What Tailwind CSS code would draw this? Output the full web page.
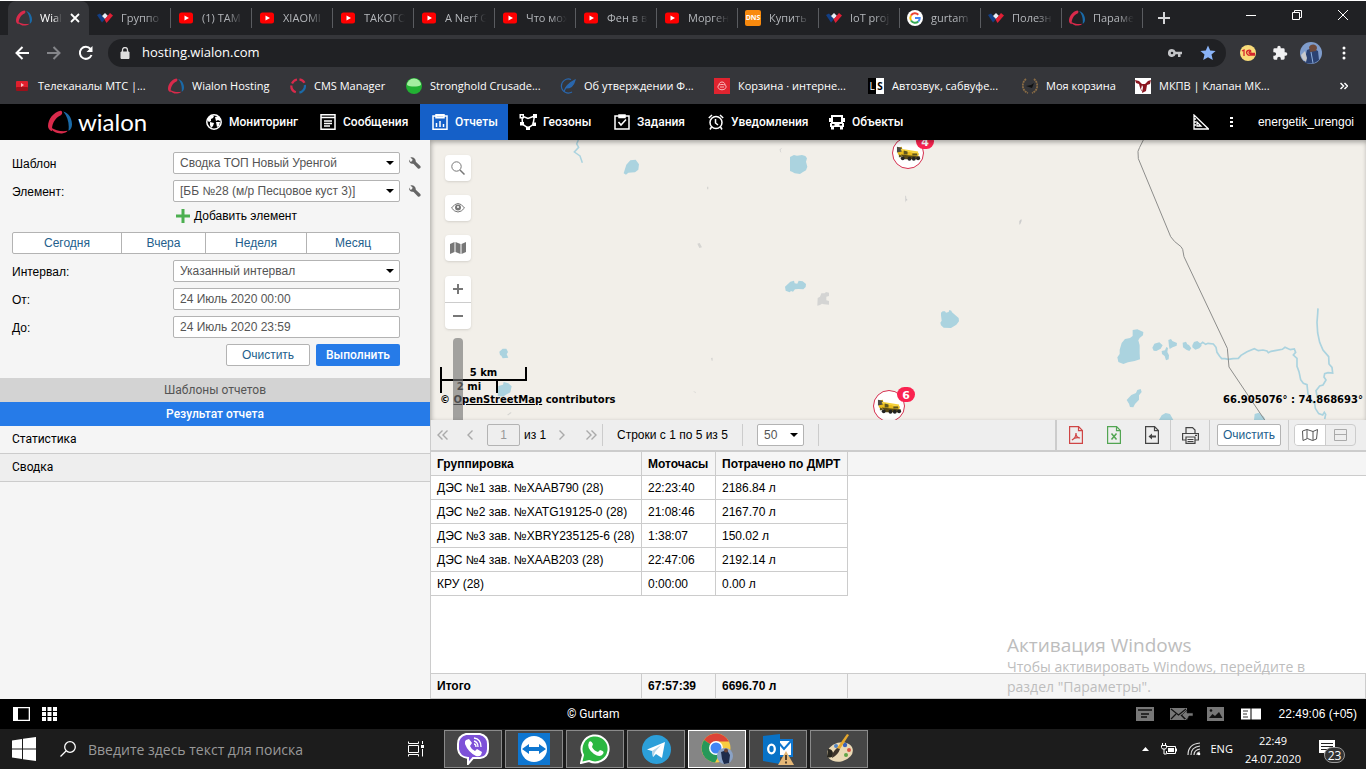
<!DOCTYPE html>
<html lang="ru">
<head>
<meta charset="utf-8">
<title>Wialon Hosting</title>
<script src="https://cdn.jsdelivr.net/npm/@tailwindcss/browser@4"></script>
</head>
<body class="flex h-screen flex-col overflow-hidden bg-white font-['Liberation_Sans',Arial,sans-serif] text-xs text-black">

<svg class="hidden" aria-hidden="true">
  <symbol id="ring" viewBox="0 0 24 24">
    <path fill="#d92a4b" d="M12.500.8C5.500 2 0 9.500 0 16c0 2.600 1.600 4.600 4.200 5.200C3.200 15 6.500 8 12.800 5.200c2-.9 1.800-4.600-.3-4.400z"/>
    <path fill="#d92a4b" d="M2.800 17.500c1.200 3.800 5.700 6.200 11.200 5.900 2.700-.2 4.700-1.200 5.700-2.600-6 1-12-.1-16.900-3.300z"/>
    <path fill="#1a6aa8" d="M15.300 1.500C20.500 3 23.800 8 24 14c.1 3.400-1.200 5.800-3.600 6.800C21.500 14.500 20 7 15.300 1.500z"/>
  </symbol>
  <symbol id="yt" viewBox="0 0 16 16"><rect x="1" y="2.500" width="14" height="11" rx="2.500" fill="#f00"/><path d="M6.500 5.500v5L11 8z" fill="#fff"/></symbol>
  <symbol id="forum" viewBox="0 0 16 16"><path d="M0 5l3-1.500L8 9l-3 3.500z" fill="#123f86"/><path d="M5 6l3-3 3 3-3 3z" fill="#e8edf5"/><path d="M7.500 9.500L13 3l3 2.500L9.500 13z" fill="#e01f35"/></symbol>
  <symbol id="wrench" viewBox="0 0 12 12"><path d="M1.400.5L3.600 2.600l-.6 1.600-1.600.5L0 2.500C-.2 4.800 1 6.800 3.200 6.800c.6 0 1 0 1.400.2l4.300 4.500c1.300 1 3.600-.8 2.400-2.400L6.800 4.700C7 1.800 4.200-.4 1.400.5z" fill="#666"/></symbol>
  <symbol id="truck" viewBox="0 0 26 16">
    <path d="M1 2l5-1 1 4 17 3-1 3H8L2 9z" fill="#e9bc1d"/><path d="M1 1l5 1v4L1 7z" fill="#4a4a45"/><path d="M5 3l18 3v2L5 5z" fill="#f5d23a"/><path d="M8 5l4 1v3H8zM17 8h5v2h-5zM3 9l3 1v2H3z" fill="#5f5620"/><path d="M5 9l20 2-1 3H9z" fill="#5a4b16"/>
    <circle cx="7" cy="13" r="2" fill="#222"/><circle cx="14" cy="13.500" r="2" fill="#222"/><circle cx="18.500" cy="13.500" r="2" fill="#222"/><circle cx="23" cy="13" r="2" fill="#222"/>
  </symbol>
</svg>

<div class="h-px shrink-0 bg-white"></div>

<!-- Browser tabs -->
<header class="shrink-0 font-['Open_Sans','Noto_Sans',sans-serif] text-[11px] text-white">
  <div class="flex h-[34px] bg-[#202124]">
    <div class="flex min-w-0 flex-1 pl-2">
      <div class="flex w-[81px] shrink-0 items-center rounded-t-lg bg-[#35363a] pl-2">
        <svg class="size-4 shrink-0"><use href="#ring"/></svg>
        <span class="ml-2 w-[22px] overflow-hidden whitespace-nowrap [mask-image:linear-gradient(to_right,#000_60%,transparent)]">Wialon</span>
        <button aria-label="Закрыть вкладку" class="ml-2"><svg class="size-2.5" viewBox="0 0 10 10" stroke="#fff" stroke-width="1.800"><path d="M1 1l8 8M9 1L1 9"/></svg></button>
      </div>
      <div class="flex min-w-0 text-[#b4b7bb] *:flex *:w-[81px] *:shrink-0 *:items-center *:gap-2 *:pl-2">
        <div><svg class="size-4 shrink-0"><use href="#forum"/></svg><span class="w-[41px] overflow-hidden whitespace-nowrap [mask-image:linear-gradient(to_right,#000_60%,transparent)]">Группо</span><i class="ml-auto -mr-px h-5 w-px shrink-0 bg-[#5a5c60]"></i></div>
        <div><svg class="size-4 shrink-0"><use href="#yt"/></svg><span class="w-[41px] overflow-hidden whitespace-nowrap [mask-image:linear-gradient(to_right,#000_60%,transparent)]">(1) ТАМ</span><i class="ml-auto -mr-px h-5 w-px shrink-0 bg-[#5a5c60]"></i></div>
        <div><svg class="size-4 shrink-0"><use href="#yt"/></svg><span class="w-[41px] overflow-hidden whitespace-nowrap [mask-image:linear-gradient(to_right,#000_60%,transparent)]">XIAOMI</span><i class="ml-auto -mr-px h-5 w-px shrink-0 bg-[#5a5c60]"></i></div>
        <div><svg class="size-4 shrink-0"><use href="#yt"/></svg><span class="w-[41px] overflow-hidden whitespace-nowrap [mask-image:linear-gradient(to_right,#000_60%,transparent)]">ТАКОГО</span><i class="ml-auto -mr-px h-5 w-px shrink-0 bg-[#5a5c60]"></i></div>
        <div><svg class="size-4 shrink-0"><use href="#yt"/></svg><span class="w-[41px] overflow-hidden whitespace-nowrap [mask-image:linear-gradient(to_right,#000_60%,transparent)]">A Nerf G</span><i class="ml-auto -mr-px h-5 w-px shrink-0 bg-[#5a5c60]"></i></div>
        <div><svg class="size-4 shrink-0"><use href="#yt"/></svg><span class="w-[41px] overflow-hidden whitespace-nowrap [mask-image:linear-gradient(to_right,#000_60%,transparent)]">Что мож</span><i class="ml-auto -mr-px h-5 w-px shrink-0 bg-[#5a5c60]"></i></div>
        <div><svg class="size-4 shrink-0"><use href="#yt"/></svg><span class="w-[41px] overflow-hidden whitespace-nowrap [mask-image:linear-gradient(to_right,#000_60%,transparent)]">Фен в в</span><i class="ml-auto -mr-px h-5 w-px shrink-0 bg-[#5a5c60]"></i></div>
        <div><svg class="size-4 shrink-0"><use href="#yt"/></svg><span class="w-[41px] overflow-hidden whitespace-nowrap [mask-image:linear-gradient(to_right,#000_60%,transparent)]">Морген</span><i class="ml-auto -mr-px h-5 w-px shrink-0 bg-[#5a5c60]"></i></div>
        <div><span class="flex size-4 shrink-0 items-center justify-center rounded-xs bg-[#f98a0e] text-[7px] font-bold text-white">DNS</span><span class="w-[41px] overflow-hidden whitespace-nowrap [mask-image:linear-gradient(to_right,#000_60%,transparent)]">Купить</span><i class="ml-auto -mr-px h-5 w-px shrink-0 bg-[#5a5c60]"></i></div>
        <div><svg class="size-4 shrink-0"><use href="#forum"/></svg><span class="w-[41px] overflow-hidden whitespace-nowrap [mask-image:linear-gradient(to_right,#000_60%,transparent)]">IoT proj</span><i class="ml-auto -mr-px h-5 w-px shrink-0 bg-[#5a5c60]"></i></div>
        <div><svg class="size-4 shrink-0" viewBox="0 0 16 16" fill="none" stroke-width="2"><circle cx="8" cy="8" r="8" fill="#fff"/><path d="M4 5.500A4.700 4.700 0 0 1 11.300 4.700" stroke="#ea4335"/><path d="M4 5.500a4.800 4.800 0 0 0 0 5" stroke="#fbbc05"/><path d="M4 10.500a4.700 4.700 0 0 0 7.300 1" stroke="#34a853"/><path d="M11.300 11.500A4.700 4.700 0 0 0 12.700 8H8" stroke="#4285f4"/></svg><span class="w-[41px] overflow-hidden whitespace-nowrap [mask-image:linear-gradient(to_right,#000_60%,transparent)]">gurtam</span><i class="ml-auto -mr-px h-5 w-px shrink-0 bg-[#5a5c60]"></i></div>
        <div><svg class="size-4 shrink-0"><use href="#forum"/></svg><span class="w-[41px] overflow-hidden whitespace-nowrap [mask-image:linear-gradient(to_right,#000_60%,transparent)]">Полезн</span><i class="ml-auto -mr-px h-5 w-px shrink-0 bg-[#5a5c60]"></i></div>
        <div><svg class="size-4 shrink-0"><use href="#ring"/></svg><span class="w-[41px] overflow-hidden whitespace-nowrap [mask-image:linear-gradient(to_right,#000_60%,transparent)]">Параме</span><i class="ml-auto -mr-px h-5 w-px shrink-0 bg-[#5a5c60]"></i></div>
      </div>
      <button aria-label="Новая вкладка" class="ml-4"><svg class="size-3" viewBox="0 0 12 12" stroke="#d5d6d8" stroke-width="2"><path d="M6 0v12M0 6h12"/></svg></button>
    </div>
    <div class="flex h-7 w-[138px] shrink-0 items-center">
      <button aria-label="Свернуть" class="flex w-[46px] justify-center"><svg class="size-2.5" viewBox="0 0 10 10" stroke="#fff"><path d="M0 5.500h10"/></svg></button>
      <button aria-label="Восстановить" class="flex w-[46px] justify-center"><svg class="size-2.5" viewBox="0 0 10 10" fill="none" stroke="#fff"><path d="M.5 2.500h7v7h-7zM2.500 2.500v-2h7v7h-2"/></svg></button>
      <button aria-label="Закрыть" class="flex w-[46px] justify-center"><svg class="size-2.5" viewBox="0 0 10 10" stroke="#fff"><path d="M0 0l10 10M10 0L0 10"/></svg></button>
    </div>
  </div>

  <!-- Address bar -->
  <div class="flex h-[35px] items-center bg-[#35363a]">
    <nav class="flex w-[108px] shrink-0 items-center gap-4 pl-3.5">
      <button aria-label="Назад"><svg class="size-4" viewBox="0 0 16 16" fill="none" stroke="#fff" stroke-width="2"><path d="M15 8H2.500M8.500 2l-6 6 6 6"/></svg></button>
      <button aria-label="Вперёд"><svg class="size-4" viewBox="0 0 16 16" fill="none" stroke="#85868a" stroke-width="2"><path d="M1 8h12.500M7.500 2l6 6-6 6"/></svg></button>
      <button aria-label="Обновить"><svg class="size-4" viewBox="0 0 16 16" fill="none" stroke="#fff" stroke-width="2"><path d="M13.500 10A6 6 0 1 1 12.500 4"/><path d="M14.500 1v6h-6z" fill="#fff" stroke="none"/></svg></button>
    </nav>
    <div class="flex h-7 min-w-0 flex-1 items-center rounded-full bg-[#202124] pr-2.5 pl-3">
      <svg class="mr-3 h-3 w-2.5 shrink-0" viewBox="0 0 10 12"><path d="M1 5h8v6.500H1z" fill="#ddd" stroke="#ddd"/><path d="M2.500 5V3a2.500 2.500 0 0 1 5 0v2" fill="none" stroke="#ddd" stroke-width="1.300"/></svg>
      <input aria-label="Адрес" value="hosting.wialon.com" class="min-w-0 flex-1 text-[13px] text-white outline-none">
      <svg class="mr-[18px] h-3 w-3.5" viewBox="0 0 14 10"><path fill-rule="evenodd" fill="#c4c5c8" d="M4 1a4 4 0 1 0 3.700 5.300H10V9h2.500V6.300H14V3.700H7.700A4 4 0 0 0 4 1zm0 2.700a1.300 1.300 0 1 1 0 2.600 1.300 1.300 0 0 1 0-2.600z"/></svg>
      <svg class="size-4" viewBox="0 0 16 16"><path fill="#8ab4f8" d="M8 .5l2.200 5 5.400.5-4.100 3.600 1.300 5.400L8 12.200 3.200 15l1.300-5.400L.4 6l5.400-.5z"/></svg>
    </div>
    <div class="flex w-[140px] shrink-0 items-center pl-3.5">
      <svg class="size-4" viewBox="0 0 16 16"><circle cx="8" cy="8" r="8" fill="#f9dc7a"/><path d="M2 6l2-1v6M11 6a2.500 2.500 0 1 0-1 4h5M11 7.500a1 1 0 1 0-1 1h5" stroke="#d4252c" fill="none" stroke-width="1.300"/></svg>
      <svg class="ml-4 size-4" viewBox="0 0 24 24"><path fill="#f1f1f2" d="M20.500 11H19V7a2 2 0 0 0-2-2h-4V3.500a2.500 2.500 0 0 0-5 0V5H4a2 2 0 0 0-2 2v3.800h1.500a2.700 2.700 0 0 1 0 5.400H2V20c0 1.100.9 2 2 2h3.800v-1.500a2.700 2.700 0 0 1 5.400 0V22H17a2 2 0 0 0 2-2v-4h1.500a2.500 2.500 0 0 0 0-5z"/></svg>
      <svg class="ml-3 size-[22px]" viewBox="0 0 22 22"><circle cx="11" cy="11" r="11" fill="#7f9ccb"/><path d="M4 20L7 8l5-2 6 3 1 9q-7 6-15 2z" fill="#2b4272"/><path d="M9 5c2-4 8-3 8 1l-1 3-6 1z" fill="#6d4a3c"/><path d="M1 13l4-4 2 7-1 4q-4-2-5-7z" fill="#c8c9cc"/><path d="M11 10l2 11" stroke="#8fb0dd"/></svg>
      <svg class="ml-5 h-4 w-1" viewBox="0 0 4 16" fill="#fff"><circle cx="2" cy="3" r="1.500"/><circle cx="2" cy="8" r="1.500"/><circle cx="2" cy="13" r="1.500"/></svg>
    </div>
  </div>

  <!-- Bookmarks -->
  <nav class="flex h-[34px] items-center bg-[#35363a] pr-[18px] pb-0.5 pl-3.5 *:whitespace-nowrap">
    <a href="#" class="flex w-[154px] shrink-0 items-center gap-2"><svg class="size-4" viewBox="0 0 16 16"><rect x="2" y="3" width="12" height="9" rx="1" fill="#df1f2d"/><rect x="2" y="9" width="12" height="4" rx="1" fill="#9d101a"/><path d="M7 5v4l3-2z" fill="#f6c3c6"/></svg>Телеканалы МТС |...</a>
    <a href="#" class="flex w-[122px] shrink-0 items-center gap-2"><svg class="size-4"><use href="#ring"/></svg>Wialon Hosting</a>
    <a href="#" class="flex w-[116px] shrink-0 items-center gap-2"><svg class="size-4" viewBox="0 0 16 16" fill="none" stroke-width="2.200"><path d="M2 5.500a7 7 0 0 1 5-4M9.500 1.300a7 7 0 0 1 5 3.500M1.300 7.500a7 7 0 0 0 4.500 6.800" stroke="#d92a4b"/><path d="M14.900 7a7 7 0 0 1-5.500 7.700" stroke="#1a6aa8"/></svg>CMS Manager</a>
    <a href="#" class="flex w-[154px] shrink-0 items-center gap-2"><svg class="size-4" viewBox="0 0 16 16"><circle cx="8" cy="8" r="8" fill="#22b233"/><path d="M1 7a7 6.500 0 0 1 14 0c-3 2-11 2-14 0z" fill="#a4eea0"/></svg>Stronghold Crusade...</a>
    <a href="#" class="flex w-[154px] shrink-0 items-center gap-2"><svg class="size-4" viewBox="0 0 16 16" fill="none" stroke="#2a67ad" stroke-width="1.200"><path d="M11 1.500A7 7 0 1 0 12 14"/><path d="M4 14c1-5 5-9 11-12-1 4-4 8-9 8" fill="#2a67ad"/></svg>Об утверждении Ф...</a>
    <a href="#" class="flex w-[154px] shrink-0 items-center gap-2"><svg class="size-4" viewBox="0 0 16 16"><path d="M0 0h16v16H0z" fill="#e0242f"/><path d="M5 7c0-4 6-4 6 0M4 8c0-2 8-2 8 0 1 5-9 5-8 0zM6 9h4" stroke="#fbb8bc" fill="none"/></svg>Корзина · интерне...</a>
    <a href="#" class="flex w-[154px] shrink-0 items-center gap-2"><span class="flex size-4 text-[10px] leading-4"><b class="w-2 bg-black text-center font-normal text-white">L</b><b class="w-2 bg-white text-center text-black">S</b></span>Автозвук, сабвуфе...</a>
    <a href="#" class="flex w-[113px] shrink-0 items-center gap-2"><svg class="size-4" viewBox="0 0 16 16" fill="none"><path d="M4 1c-5 4-4 12 2 14M12 1c5 4 4 12-2 14" stroke="#8a6c45" stroke-width="1.800" stroke-dasharray="2 .7"/><path d="M4 8l6 2 2-5-3 2z" fill="#111"/></svg>Моя корзина</a>
    <a href="#" class="flex shrink-0 items-center gap-2"><svg class="size-4" viewBox="0 0 16 16"><path d="M0 0h16v16H0z" fill="#fff"/><path d="M0 2l4 1 3 3h3l3-3 3-1-1 4-3 1-1 6-4 2 1-6-1-2-1 4 2 3C6 13 5 10 4 6L1 5z" fill="#8b1520"/></svg>МКПВ | Клапан МК...</a>
    <button aria-label="Другие закладки" class="ml-auto"><svg class="h-2 w-2" viewBox="0 0 8 8" fill="none" stroke="#fff" stroke-width="1.500"><path d="M.5 1l3 3-3 3M4.500 1l3 3-3 3"/></svg></button>
  </nav>
</header>

<!-- Application header -->
<header class="flex h-9 shrink-0 items-center bg-black font-[Roboto,'Liberation_Sans',sans-serif] text-white">
  <a href="#" class="flex w-[194px] shrink-0 items-center pl-12" aria-label="Wialon">
    <svg class="size-6"><use href="#ring"/></svg>
    <span class="ml-1.5 font-[Lato,sans-serif] text-2xl leading-6">wialon</span>
  </a>
  <nav class="flex h-full font-medium *:flex *:shrink-0 *:items-center *:gap-[7px] *:pl-3 *:whitespace-nowrap">
    <a href="#" class="w-[114px]"><svg class="size-4" viewBox="0 0 16 16"><circle cx="8" cy="8" r="7.200" fill="none" stroke="#fff" stroke-width="1.500"/><path fill="#fff" d="M2 4l4-3 2 1-1 2-2 1v2L3 8 1 6zM4 8l4 1-1 3-2 2-1-3zM9 3l4-1 2 4-1 1-2-1-2 1zM10 8l4 0-1 4-2 1z"/></svg>Мониторинг</a>
    <a href="#" class="w-[112px]"><svg class="size-4" viewBox="0 0 16 16" fill="none" stroke="#fff" stroke-width="1.500"><path d="M1 .8h14v14.500H1zM1 3.500h14M4 7h8M4 9.500h8M4 12h6"/></svg>Сообщения</a>
    <a href="#" class="w-[88px] bg-[#1560c8]"><svg class="size-4" viewBox="0 0 16 16" fill="none" stroke="#fff" stroke-width="1.500"><path d="M1 2h14v13.200H1zM4 .8h8v3H4zM4.500 9v4M8 7v6M11.500 10v3"/></svg>Отчеты</a>
    <a href="#" class="w-[94px]"><svg class="size-4 overflow-visible" viewBox="0 0 16 16" fill="none" stroke="#fff" stroke-width="1.500"><path d="M2 2l6 2.500L14.500 2 13 10.500 8 14l-5.500-4z"/><path d="M-.5 0h4.500v4.500h-4.500zM13 0h4v4h-4zM6 12.500h4V16H6zM0 8h4v3.500H0zM12.500 8.500h3.500v3.500h-3.500z" fill="#fff" stroke="none"/><path d="M1 1.500h1.500V3H1z" fill="#000" stroke="none"/></svg>Геозоны</a>
    <a href="#" class="w-[94px]"><svg class="size-4" viewBox="0 0 16 16" fill="none" stroke="#fff" stroke-width="1.500"><path d="M1 2h14v13H1zM5 1h6v2.500H5zM4.500 8l2.500 3 5-5.500"/></svg>Задания</a>
    <a href="#" class="w-[121px]"><svg class="size-4" viewBox="0 0 16 16" fill="none" stroke="#fff" stroke-width="1.500"><circle cx="8" cy="8.500" r="6"/><path d="M.8 4L4 1M15.200 4L12 1M7.500 5v4l2.500 2M3.500 13l-1.500 2.500M12.500 13l1.500 2.500"/></svg>Уведомления</a>
    <a href="#"><svg class="size-4" viewBox="0 0 16 16"><path fill="#fff" fill-rule="evenodd" d="M2 1h12v3h2v4h-2v1h1v4h-1v2.500h-3V13H5v2.500H2V13H1V9h1V8H0V4h2zm2 2v5h8V3zM3 10v1.500h2.500V10zM10.500 10v1.500H13V10z"/></svg>Объекты</a>
  </nav>
  <div class="ml-auto flex items-center pr-3 font-['Liberation_Sans',sans-serif]">
    <button aria-label="Инструменты"><svg class="size-4" viewBox="0 0 16 16" fill="none" stroke="#fff" stroke-width="1.300"><path d="M1 1v14h14.500zM4 8v4h4zM1 5h2M1 8h2M1 11h2"/></svg></button>
    <button aria-label="Меню" class="mr-6 ml-5"><svg class="h-3 w-[5px]" viewBox="0 0 5 12" fill="#fff"><path d="M1 1h3v2H1zM1 5h3v2H1zM1 9h3v2H1z"/></svg></button>
    <a href="#">energetik_urengoi</a>
  </div>
</header>

<main class="flex min-h-0 flex-1">
  <!-- Report parameters -->
  <aside class="w-[430px] shrink-0 bg-[#f5f5f5]">
    <form class="flex h-[238px] flex-col gap-1.5 pt-3 pl-3">
      <div class="flex h-[22px] items-center">
        <label for="tpl" class="w-[161px] pt-0.5">Шаблон</label>
        <div class="relative w-[227px]"><select id="tpl" class="h-[22px] w-full appearance-none rounded-xs border border-[#b3b3b3] bg-white px-1.5 text-[#555]"><option>Сводка ТОП Новый Уренгой</option></select><svg class="pointer-events-none absolute top-[9px] right-1.5 h-1 w-2" viewBox="0 0 8 4"><path d="M0 0h8L4 4z"/></svg></div>
        <button type="button" aria-label="Настроить шаблон" class="ml-[9px]"><svg class="size-3"><use href="#wrench"/></svg></button>
      </div>
      <div class="flex h-[22px] items-center">
        <label for="unit" class="w-[161px] pt-0.5">Элемент:</label>
        <div class="relative w-[227px]"><select id="unit" class="h-[22px] w-full appearance-none rounded-xs border border-[#b3b3b3] bg-white px-1.5 text-[#555]"><option>[ББ №28 (м/р Песцовое куст 3)]</option></select><svg class="pointer-events-none absolute top-[9px] right-1.5 h-1 w-2" viewBox="0 0 8 4"><path d="M0 0h8L4 4z"/></svg></div>
        <button type="button" aria-label="Настроить элемент" class="ml-[9px]"><svg class="size-3"><use href="#wrench"/></svg></button>
      </div>
      <button type="button" class="ml-[164px] flex h-[18px] items-center gap-1 self-start pb-0.5"><svg class="size-3.5" viewBox="0 0 14 14" stroke="#4caf50" stroke-width="3"><path d="M7 0v14M0 7h14"/></svg>Добавить элемент</button>
      <div class="flex h-[22px] w-[388px] rounded-xs border border-[#b3b3b3] bg-white text-[#235e8c]">
        <button type="button" class="w-[109px] border-r border-[#b3b3b3]">Сегодня</button>
        <button type="button" class="w-[84px] border-r border-[#b3b3b3]">Вчера</button>
        <button type="button" class="w-[101px] border-r border-[#b3b3b3]">Неделя</button>
        <button type="button" class="flex-1">Месяц</button>
      </div>
      <div class="flex h-[22px] items-center">
        <label for="interval" class="w-[161px] pt-0.5">Интервал:</label>
        <div class="relative w-[227px]"><select id="interval" class="h-[22px] w-full appearance-none rounded-xs border border-[#b3b3b3] bg-white px-1.5 text-[#555]"><option>Указанный интервал</option></select><svg class="pointer-events-none absolute top-[9px] right-1.5 h-1 w-2" viewBox="0 0 8 4"><path d="M0 0h8L4 4z"/></svg></div>
      </div>
      <div class="flex h-[22px] items-center">
        <label for="from" class="w-[161px] pt-0.5">От:</label>
        <input id="from" value="24 Июль 2020 00:00" class="h-[22px] w-[227px] rounded-xs border border-[#b3b3b3] bg-white px-1.5 text-[#555]">
      </div>
      <div class="flex h-[22px] items-center">
        <label for="to" class="w-[161px] pt-0.5">До:</label>
        <input id="to" value="24 Июль 2020 23:59" class="h-[22px] w-[227px] rounded-xs border border-[#b3b3b3] bg-white px-1.5 text-[#555]">
      </div>
      <div class="flex w-[388px] justify-end gap-1.5">
        <button type="button" class="h-[22px] w-[84px] rounded-xs border border-[#b3b3b3] bg-white text-[#235e8c]">Очистить</button>
        <button type="submit" class="h-[22px] w-[84px] rounded-xs bg-[#267be8] font-[Roboto,sans-serif] font-medium text-white">Выполнить</button>
      </div>
    </form>
    <div class="font-[Roboto,'Liberation_Sans',sans-serif]">
      <button class="block h-6 w-full bg-[#d3d3d3] text-[#555]">Шаблоны отчетов</button>
      <button class="block h-6 w-full bg-[#267be8] font-medium text-white">Результат отчета</button>
      <a href="#" class="flex h-7 items-center border-b border-[#ccc] px-3 pb-0.5">Статистика</a>
      <a href="#" class="flex h-7 items-center border-b border-[#ccc] bg-[#eee] px-3 pb-0.5">Сводка</a>
    </div>
  </aside>

  <section class="flex min-w-0 flex-1 flex-col">
    <!-- Map -->
    <div class="relative h-[280px] shrink-0 overflow-hidden bg-[#f2efe9]">
      <svg class="absolute inset-0 h-full w-full" fill="#abd3df">
        <g transform="scale(.33333)">
          <path d="M445 0l-5 12 6 10-13 14 17 12 7 20" fill="none" stroke="#abd3df" stroke-width="4.500"/>
          <path d="M581 100l8-26 12-13 16-2 10 14-2 16-10 8-20 1-7 6z"/>
          <path d="M208 635l10-9h11l5 10-4 7 5 10-17 2-4-8-4-2z"/>
          <path d="M203 768l2-30 14-4 2-8 14 4 10 9-4 18-16 9-4 4z"/>
          <path d="M831 140h4v8h-4zM802 311l7-2 7 13-8 2zM843 654l5-1v9h-3zM789 753l8 3v4zM231 825l10-8 4 1-10 8z" fill="#d6d5d2"/>
        </g>
        <g transform="translate(300) scale(.33333)">
          <path d="M180 51l12-6 9 2 15-2 10 3 5 7-3 10 4 15-4 11-9 5-9 6-16-2-8-5-6-2z"/>
          <path d="M165 440l16-15 11-3 2 8 8 1 4-9 12 2 10 8-1 9-7 7-15-1-10 1-6 7-6-2-4 4-12-5z"/>
          <path d="M633 518l5-4h7l3 4 8-2 2-6 6 2 2 5 20 17 1 10-8 10-16 10-22-1-8-7-2-8 4-6-2-16z"/>
          <path d="M263 474l7-4 4-10 10 0 4-4 9 2v10l-8 2v11l8 2v11l-15-1-6-2-6 4-8 2z" fill="#d4d4d3"/>
          <path d="M149 28l8-5-6 6 3 10-4-5zM526 167h2l1 9 4 4-5 2-2 6zM868 243l6-6 1 5-4 10-3 2z" fill="#ccc"/>
        </g>
        <g transform="translate(610) scale(.33333)">
          <path d="M278 570l14-2 18 8-1 10-10 8-4 7 4 15v24l1 18-16 5-20 4-14 5-15-6-3-14 7-10v-13l6-20 10-12 15-3 8-6z"/>
          <path d="M337 623l6-12 15-4 10 9-6 10-13 7-8-1zM385 600l8-3 4 6 14 6-1 8-12 5-9 5-2-8zM365 633l10-2 4-10 5 3-2 12 5 10-1 12-8 3-4-13-8-6zM428 608l10-3 4 8 5 2 7 10-6 8-9-4-10-7zM457 616l5-10 10-3 10 8 3 6-7 8-12 4-9-7z"/>
          <path d="M260 780l14-15 14-6 4-9 10-3 3 9-8 10v13l-12 13-5 10-10-1-3-10zM357 840l8-14 12-7 13 3 10 18zM642 840l2-18 12-4 16 12 4 10z"/>
          <path d="M481 613l7-6 9 6 7-3 16 2 8 10 3 15 8 12 6 7h10l10 2 14-2 16-1 8-9 18-11 22-9 12 6 14-2 12 3 4 5 8-4 16-3 18-3 8-6 16 7 12-2 4 10-7 8 11 10v24l6 16 5 24 8 11 11 4 3 28 10 20 10 8 2 15 10 16 12 4 5-8 4 6-3 14" fill="none" stroke="#abd3df" stroke-width="5"/>
          <path d="M834 505l-1 17-2 25 2 32 6 28 10 23 17 20 1 22 9 10 2 17-14-1-10 3-2 10 6 9-9 15-10 3-11 14 5 26" fill="none" stroke="#abd3df" stroke-width="5"/>
          <path d="M310 0l-11 22-5 12 1 22L392 290q8 14 31 30l5 8 4 22L562 625l5 56 107 159" fill="none" stroke="#8d8d8b" stroke-width="3"/>
        </g>
        <g>
          <circle cx="478" cy="13" r="15.500" fill="#fff" stroke="#d6304f"/><use href="#truck" x="466" y="5" width="25" height="17"/>
          <rect x="486" y="-6" width="18" height="15" rx="7.500" fill="#fa2350"/>
          <circle cx="459" cy="266" r="15.500" fill="#fff" stroke="#d6304f"/><use href="#truck" x="447" y="258" width="25" height="17"/>
          <rect x="467" y="247" width="18" height="15" rx="7.500" fill="#fa2350"/>
          <g class="font-['DejaVu_Sans',sans-serif] text-[11px] font-bold" fill="#fff" text-anchor="middle"><text x="495" y="6">4</text><text x="476" y="259">6</text></g>
        </g>
      </svg>
      <div class="absolute top-[15px] left-[15px] flex w-[26px] flex-col items-center *:rounded-sm *:bg-white *:shadow">
        <button aria-label="Поиск" class="flex size-[26px] items-center justify-center"><svg class="size-3.5" viewBox="0 0 14 14" fill="none" stroke="#777"><circle cx="5.500" cy="5.500" r="4.700"/><path d="M9 9l4.500 4.500" stroke-width="1.500"/></svg></button>
        <button aria-label="Видимость" class="mt-3.5 flex size-[26px] items-center justify-center"><svg class="h-2.5 w-3.5" viewBox="0 0 14 10" fill="none" stroke="#777"><path d="M.5 5q6.500-9 13 0-6.500 8-13 0z"/><circle cx="7" cy="4.500" r="2" fill="#777" stroke-width="2"/><circle cx="7" cy="4" r="1" fill="#fff" stroke="none"/></svg></button>
        <button aria-label="Слои карты" class="mt-3.5 flex size-[26px] items-center justify-center"><svg class="h-3 w-4" viewBox="0 0 16 12" fill="#777"><path d="M0 2l4.500-2v10L0 12zM5.500 0l5 2v10l-5-2zM11.500 2L16 0v10l-4.500 2z"/></svg></button>
        <div class="mt-[15px] flex w-[26px] flex-col">
          <button aria-label="Приблизить" class="flex h-[27px] items-center justify-center border-b border-[#ccc]"><svg class="size-2.5" viewBox="0 0 10 10" stroke="#777" stroke-width="2"><path d="M5 0v10M0 5h10"/></svg></button>
          <button aria-label="Отдалить" class="flex h-[26px] items-center justify-center"><svg class="size-2.5" viewBox="0 0 10 10" stroke="#777" stroke-width="2"><path d="M0 5h10"/></svg></button>
        </div>
      </div>
      <div class="absolute bottom-3.5 left-2.5 font-['DejaVu_Sans',sans-serif] text-[10px] leading-3 font-bold">
        <div class="h-3.5 w-[87px] border-x-2 border-b-2 border-black text-center">5 km</div>
        <div class="h-3 w-[58px] border-x-2 border-black text-center">2 mi</div>
        <div class="mt-px">© <a href="#" class="underline">OpenStreetMap</a> contributors</div>
      </div>
      <div class="absolute bottom-0 left-[23px] h-[82px] w-2.5 rounded-t-sm bg-[#777]/65"></div>
      <div class="absolute right-[3px] bottom-3.5 font-['DejaVu_Sans',sans-serif] text-[10px] leading-3 font-bold">66.905076° : 74.868693°</div>
      <div class="pointer-events-none absolute inset-0 shadow-[inset_1px_2px_5px_#0005]"></div>
    </div>

    <!-- Report toolbar -->
    <div class="flex h-8 shrink-0 items-center border-b-2 border-l border-[#ccc] bg-[#eee]">
      <button aria-label="Первая" class="ml-1.5 flex w-6"><svg class="h-2.5 w-3" viewBox="0 0 12 10" fill="none" stroke="#aaa" stroke-width="1.400"><path d="M5.500.5L1 5l4.500 4.500M10.500.5L6 5l4.500 4.500"/></svg></button>
      <button aria-label="Предыдущая" class="flex w-[26px] pl-1.5"><svg class="h-2.5 w-1.5" viewBox="0 0 6 10" fill="none" stroke="#aaa" stroke-width="1.400"><path d="M5.500.5L1 5l4.500 4.500"/></svg></button>
      <input aria-label="Страница" value="1" class="h-[22px] w-[33px] rounded-xs border border-[#b3b3b3] text-center text-[#999]">
      <span class="ml-1 w-[35px]">из 1</span>
      <button aria-label="Следующая"><svg class="h-2.5 w-1.5" viewBox="0 0 6 10" fill="none" stroke="#aaa" stroke-width="1.400"><path d="M.5.5L5 5 .5 9.500"/></svg></button>
      <button aria-label="Последняя" class="mr-[5px] ml-5"><svg class="h-2.5 w-3" viewBox="0 0 12 10" fill="none" stroke="#aaa" stroke-width="1.400"><path d="M1.500.5L6 5 1.500 9.500M6.500.5L11 5 6.500 9.500"/></svg></button>
      <span class="flex h-[22px] w-[141px] items-center border-x border-[#ccc] pl-3.5 whitespace-nowrap">Строки с 1 по 5 из 5</span>
      <div class="relative ml-3.5 w-[47px]"><select aria-label="Строк на странице" class="h-[22px] w-full appearance-none rounded-xs border border-[#b3b3b3] bg-white px-1.5 text-[#555]"><option>50</option></select><svg class="pointer-events-none absolute top-[9px] right-1.5 h-1 w-2" viewBox="0 0 8 4"><path d="M0 0h8L4 4z"/></svg></div>
      <i class="ml-3.5 h-[22px] w-px bg-[#ccc]"></i>
      <div class="ml-auto flex h-full items-center">
        <div class="flex h-full w-[116px] items-center gap-6 border-x border-l-2 border-[#ccc] pl-3">
          <button aria-label="PDF"><svg class="h-[18px] w-3.5" viewBox="0 0 14 18" fill="none" stroke="#cf4545" stroke-width="1.200"><path d="M.6.6h9L13.400 4.500v12.900H.6zM9.500.6v4h4"/><path d="M3 14c2-1 4-4 4-7 0 4 2 5 4 5-3-1-6 0-8 2z"/></svg></button>
          <button aria-label="Excel"><svg class="h-[18px] w-3.5" viewBox="0 0 14 18" fill="none" stroke="#52a552" stroke-width="1.200"><path d="M.6.6h9L13.400 4.500v12.900H.6zM9.500.6v4h4"/><path d="M4.500 7.500l5 6M9.500 7.500l-5 6" stroke-width="1.500"/></svg></button>
          <button aria-label="Экспорт"><svg class="h-[18px] w-3.5" viewBox="0 0 14 18" fill="none" stroke="#444" stroke-width="1.200"><path d="M.6.6h9L13.400 4.500v12.900H.6zM9.500.6v4h4"/><path d="M11 10.500H6" stroke-width="2"/><path d="M3.500 10.500l3.500-3v6z" fill="#444" stroke="none"/></svg></button>
        </div>
        <button aria-label="Печать" class="flex h-full w-[39px] items-center justify-center border-r border-[#ccc]"><svg class="h-[17px] w-[17px]" viewBox="0 0 17 17" fill="none" stroke="#444" stroke-width="1.200"><path d="M4 6V.6h6.500L13 3v3M4 13H.6V6.500h15.800V13H13M4 10h9v6.400H4zM5.500 12.500h6M5.500 14.500h6M13 8.300h2"/></svg></button>
        <div class="flex h-full items-center border-r border-[#ccc] px-[7px]"><button class="h-[22px] w-16 rounded-xs border border-[#b3b3b3] bg-white text-[#235e8c]">Очистить</button></div>
        <div class="mr-2.5 ml-[5px] flex h-[22px] w-[62px] overflow-hidden rounded-sm border border-[#ccc]">
          <button aria-label="Карта" class="flex flex-1 items-center justify-center border-r border-[#ccc] bg-white"><svg class="h-3 w-4" viewBox="0 0 16 12" fill="none" stroke="#555"><path d="M.5 2L5 .5l6 2L15.500.5l-1 9.500-4 1.500-5-2-4.500 2zM5 .5v9M11 2.500v9"/></svg></button>
          <button aria-label="Таблица" class="flex flex-1 items-center justify-center"><svg class="h-3 w-[13px]" viewBox="0 0 13 12" fill="none" stroke="#aaa"><path d="M.5.5h12v11H.5zM.5 5.500h12"/></svg></button>
        </div>
      </div>
    </div>

    <!-- Report data -->
    <div class="relative flex min-h-0 flex-1 flex-col border-l border-[#ccc]">
      <table class="w-full table-fixed border-separate border-spacing-0 text-left">
        <colgroup><col class="w-[211px]"><col class="w-[74px]"><col class="w-[132px]"><col></colgroup>
        <thead class="bg-[#f5f5f5]"><tr class="h-6 *:border-b *:border-[#ccc] *:px-1.5 *:py-0 *:font-bold *:whitespace-nowrap"><th class="border-r">Группировка</th><th class="border-r">Моточасы</th><th class="border-r">Потрачено по ДМРТ</th><td></td></tr></thead>
        <tbody class="*:h-6 *:*:border-[#ccc] *:*:px-1.5 *:*:py-0 *:*:whitespace-nowrap">
          <tr><td class="border-r border-b">ДЭС №1 зав. №XAAB790 (28)</td><td class="border-r border-b">22:23:40</td><td class="border-r border-b">2186.84 л</td></tr>
          <tr><td class="border-r border-b">ДЭС №2 зав. №XATG19125-0 (28)</td><td class="border-r border-b">21:08:46</td><td class="border-r border-b">2167.70 л</td></tr>
          <tr><td class="border-r border-b">ДЭС №3 зав. №XBRY235125-6 (28)</td><td class="border-r border-b">1:38:07</td><td class="border-r border-b">150.02 л</td></tr>
          <tr><td class="border-r border-b">ДЭС №4 зав. №XAAB203 (28)</td><td class="border-r border-b">22:47:06</td><td class="border-r border-b">2192.14 л</td></tr>
          <tr><td class="border-r border-b">КРУ (28)</td><td class="border-r border-b">0:00:00</td><td class="border-r border-b">0.00 л</td></tr>
        </tbody>
      </table>
      <table class="mt-auto w-full table-fixed border-separate border-spacing-0 bg-[#f5f5f5]">
        <colgroup><col class="w-[211px]"><col class="w-[74px]"><col class="w-[132px]"><col></colgroup>
        <tbody><tr class="h-[26px] *:border-y *:border-r *:border-[#ccc] *:px-1.5 *:py-0 *:font-bold"><td>Итого</td><td>67:57:39</td><td>6696.70 л</td><td></td></tr></tbody>
      </table>
      <div class="pointer-events-none absolute right-[54px] bottom-0 w-[305px] pb-0.5 font-['Open_Sans','Noto_Sans',sans-serif] whitespace-nowrap text-[#bdbdbd]">
        <p class="text-[19px] leading-6">Активация Windows</p>
        <p class="text-sm leading-5">Чтобы активировать Windows, перейдите в<br>раздел "Параметры".</p>
      </div>
    </div>
  </section>
</main>

<!-- Application footer -->
<footer class="flex h-[30px] shrink-0 items-center bg-black text-white">
  <div class="flex w-[41.5%] items-center gap-3 pl-3">
    <button aria-label="Панель"><svg class="h-4 w-[18px]" viewBox="0 0 18 16"><path fill="#fff" fill-rule="evenodd" d="M1 1h17v14H1zm5 1.300v11.400h10.700V2.300z"/></svg></button>
    <button aria-label="Приложения"><svg class="size-4" viewBox="0 0 16 16" fill="#fff"><path d="M0 1h4v4H0zM5.500 1h4v4h-4zM11 1h4v4h-4zM0 6h4v4H0zM5.500 6h4v4h-4zM11 6h4v4h-4zM0 11h4v4H0zM5.500 11h4v4h-4zM11 11h4v4h-4z"/></svg></button>
  </div>
  <span class="font-[Roboto,sans-serif]">© Gurtam</span>
  <div class="flex flex-1 items-center justify-end pr-[9px]">
    <svg class="h-3.5 w-[18px]" viewBox="0 0 18 14"><path d="M0 0h18v14H0z" fill="#777"/><path d="M2 3h14M5 7h8M5 10h6" stroke="#111" stroke-width="1.500"/></svg>
    <svg class="ml-4 h-3.5 w-[23px]" viewBox="0 0 23 14"><path d="M0 1h17v12H0z" fill="#777"/><path d="M1 2l7.500 6L16 2M1 12l5-5M15 12l-4-4" stroke="#111" fill="none" stroke-width="1.200"/><path d="M12 8l5-5v3h6v3h-4l-2 4z" fill="#777" stroke="#111" stroke-width=".6"/></svg>
    <svg class="ml-3.5 h-3.5 w-[17px]" viewBox="0 0 17 14"><path d="M0 0h17v14H0z" fill="#777"/><path d="M2 11l3.500-4 2.500 2 4-4 3.500 6z" fill="#111"/><circle cx="4" cy="3.500" r="1.300" fill="#111"/></svg>
    <svg class="ml-[17px] h-3 w-5" viewBox="0 0 20 12"><path d="M0 .5h9.500v11H0zM10.500.5H20v11h-9.500z" fill="#fff"/><path d="M2 3h5M2 6h4M2 9h5" stroke="#333"/></svg>
    <time class="ml-[18px]">22:49:06 (+05)</time>
  </div>
</footer>

<!-- Desktop taskbar -->
<footer class="flex h-10 shrink-0 bg-[#1c1c1c] font-['Open_Sans','Noto_Sans',sans-serif] text-white">
  <div class="flex w-[444px] shrink-0 items-center pl-3">
    <button aria-label="Пуск"><svg class="size-6" viewBox="0 0 24 24" fill="#fff"><path d="M0 3.400l10-1.400v9.500H0zM11 1.800L24 0v11.500H11zM0 12.500h10V22L0 20.600zM11 12.500h13V24l-13-1.800z"/></svg></button>
    <svg class="ml-6 size-4" viewBox="0 0 16 16" fill="none" stroke="#fff" stroke-width="1.300"><circle cx="10" cy="6" r="5.300"/><path d="M6 10L.5 15.500"/></svg>
    <input aria-label="Поиск" placeholder="Введите здесь текст для поиска" class="ml-3 w-[300px] pt-0.5 text-sm outline-none placeholder:text-[#999]">
    <button aria-label="Представление задач" class="ml-5"><svg class="size-4" viewBox="0 0 16 16" fill="none" stroke="#fff"><path d="M.5.500v2h10v-2M.5 4.500h10v7H.5zM.5 15.500v-2h10v2M14.500 0v3M14.500 8v7.500"/><path d="M13 4h3v3h-3z" fill="#fff" stroke="none"/></svg></button>
  </div>
  <nav class="flex items-center gap-[3px] *:flex *:h-[38px] *:w-[58px] *:items-center *:justify-center *:border">
    <button aria-label="Viber" class="border-[#8a8a8a] bg-[#464646]"><svg class="size-8" viewBox="0 0 32 32"><path d="M9 1h14q8 2 8 10v5q0 8-8 9h-7l-5 6V25q-9-1-10-9v-5Q1 3 9 1z" fill="#7d51d8" stroke="#fff" stroke-width="2"/><path d="M9 7l3-1 3 4-2 3q1 3 5 5l2-2 5 3-1 3q-2 2-5 1Q11 19 8 11q-.500-3 1-4z" fill="#fff"/><path d="M17 5q7 1 7 9M17 8q4 1 4 6M17 11q2 0 2 3" stroke="#fff" fill="none" stroke-width="1.300"/></svg></button>
    <button aria-label="TeamViewer" class="border-[#8a8a8a] bg-[#464646]"><svg class="size-8" viewBox="0 0 32 32"><path d="M0 0h32v32H0z" fill="#0e76d0"/><circle cx="16" cy="16" r="13" fill="#fff"/><path d="M4 16l7-5v3h10v-3l7 5-7 5v-3H11v3z" fill="#0e76d0"/></svg></button>
    <button aria-label="WhatsApp" class="border-[#8a8a8a] bg-[#464646]"><svg class="size-[30px]" viewBox="0 0 30 30"><path d="M1 29l2-8a13.500 13.500 0 1 1 6 6z" fill="#2bb741" stroke="#fff" stroke-width="2"/><path d="M9 8q2-2 4 2l-1 3q2 4 6 5l2-2q5 1 3 4-3 4-9 0Q6 14 9 8z" fill="#fff"/></svg></button>
    <button aria-label="Telegram" class="border-[#8a8a8a] bg-[#464646]"><svg class="size-[29px]" viewBox="0 0 29 29"><circle cx="14.500" cy="14.500" r="14.500" fill="#2c9fd9"/><path d="M5 14.500L23 7l-3 16-6-4-3 3-1-6z" fill="#fff"/><path d="M10 16l9-6-6 7-2 5z" fill="#b5d5e8"/></svg></button>
    <button aria-label="Chrome" class="border-white bg-[#858585]"><svg class="size-8" viewBox="0 0 32 32"><circle cx="15" cy="15" r="14.500" fill="#f8cc42"/><path d="M15 15L3 7A14.500 14.500 0 0 1 28 8.500H15z" fill="#dc4437"/><path d="M15 15L3 7a14.500 14.500 0 0 0 11 22.500l6-11z" fill="#27985a"/><circle cx="15" cy="15" r="7" fill="#fff"/><circle cx="15" cy="15" r="5.500" fill="#4285f4"/><circle cx="24" cy="23" r="8" fill="#8aa2c6"/><path d="M20 19l6-2 3 5-1 8-5 1-2-5z" fill="#1d2b4b"/><circle cx="25" cy="17.500" r="2" fill="#6a4437"/></svg></button>
    <button aria-label="Outlook" class="border-[#8a8a8a] bg-[#464646]"><svg class="size-8" viewBox="0 0 32 32"><path d="M15 7h15v16H15z" fill="#fff" stroke="#0e76d0" stroke-width="2"/><path d="M16 9l6 7 8-9" fill="none" stroke="#0e76d0" stroke-width="2"/><path d="M1 3l17-2v30L1 28z" fill="#0872c6"/><ellipse cx="9.500" cy="16" rx="3.300" ry="4.300" fill="none" stroke="#fff" stroke-width="2.300"/><path d="M24 18l8 14H16z" fill="#e6b877"/><path d="M24 22v5M24 28.500v2" stroke="#54422d" stroke-width="2"/></svg></button>
    <button aria-label="Paint" class="border-[#8a8a8a] bg-[#464646]"><svg class="size-8" viewBox="0 0 32 32"><ellipse cx="17" cy="19" rx="13" ry="9.500" transform="rotate(-14 17 19)" fill="#ead9b5"/><path d="M5 16q5 0 5 5t-6 3z" fill="#29271f"/><circle cx="22" cy="12" r="2.200" fill="#3b62bd"/><circle cx="26" cy="17" r="2" fill="#d55643"/><circle cx="23" cy="22" r="2" fill="#62a447"/><circle cx="13" cy="13" r="2" fill="#5084c5"/><path d="M24 1l2 1-9 14-3-1z" fill="#e6a82d"/><path d="M14 15l3 1q-2 6-8 9 0-6 5-10z" fill="#40362b"/></svg></button>
  </nav>
  <div class="ml-auto flex items-center pr-5 text-[11px]">
    <svg class="h-1 w-[7px]" viewBox="0 0 7 4"><path d="M0 4l3.500-4L7 4z" fill="#fff"/></svg>
    <svg class="ml-3 h-3 w-4" viewBox="0 0 16 12" fill="none" stroke="#fff"><path d="M6 3.500h8.500v7h-9V8M15.500 5.500v3M1.500 0v2M4.500 0v2M.5 2.500h5v2l-1 1.500h-3l-1-1.500zM3 6v5h2.500"/><path d="M7 5h6v4H7z" fill="#fff" stroke="none"/></svg>
    <svg class="ml-2.5 size-3.5" viewBox="0 0 14 14" fill="none" stroke="#ddd" stroke-width="1.200"><path d="M1 13Q1 2 13 1M4 13q0-8 9-9M7 13q0-5 6-6M10 13q0-3 3-3"/><circle cx="12" cy="12" r="1.300" fill="#fff" stroke="none"/></svg>
    <span class="ml-[9px]">ENG</span>
    <time class="ml-3 pt-0.5 text-center leading-[18px]">22:49<br>24.07.2020</time>
    <button aria-label="Уведомления: 23" class="ml-[17px] flex w-7 items-center pt-1"><svg class="h-6 w-7" viewBox="0 0 28 24"><path d="M1 1h16v13H9l-3 3v-3H1z" fill="#fff"/><path d="M3 4.500h12M3 7.500h12M3 10.500h8" stroke="#222"/><rect x="6.500" y="8.500" width="20" height="15" rx="7.500" fill="#333" stroke="#999"/><text x="16.500" y="20.500" text-anchor="middle" fill="#fff" font-size="12">23</text></svg></button>
  </div>
</footer>
<div class="h-px shrink-0 bg-white"></div>
</body>
</html>
